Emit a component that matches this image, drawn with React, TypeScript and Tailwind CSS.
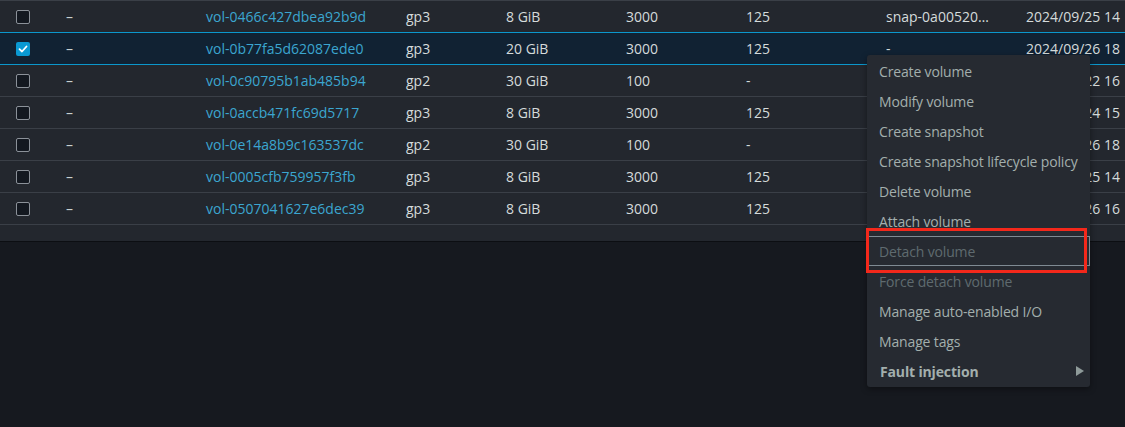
import React from "react";

type Row = {
  id: string;
  type: string;
  size: string;
  iops: string;
  tp: string;
  snap: string;
  date: string;
  selected?: boolean;
};

// snapshot column of rows 3-7 sits under the open menu
const rows: Row[] = [
  { id: "vol-0466c427dbea92b9d", type: "gp3", size: "8 GiB", iops: "3000", tp: "125", snap: "snap-0a00520…", date: "2024/09/25 14" },
  { id: "vol-0b77fa5d62087ede0", type: "gp3", size: "20 GiB", iops: "3000", tp: "125", snap: "-", date: "2024/09/26 18", selected: true },
  { id: "vol-0c90795b1ab485b94", type: "gp2", size: "30 GiB", iops: "100", tp: "-", snap: "", date: "2024/09/22 16" },
  { id: "vol-0accb471fc69d5717", type: "gp3", size: "8 GiB", iops: "3000", tp: "125", snap: "", date: "2024/09/24 15" },
  { id: "vol-0e14a8b9c163537dc", type: "gp2", size: "30 GiB", iops: "100", tp: "-", snap: "", date: "2024/09/26 18" },
  { id: "vol-0005cfb759957f3fb", type: "gp3", size: "8 GiB", iops: "3000", tp: "125", snap: "", date: "2024/09/25 14" },
  { id: "vol-0507041627e6dec39", type: "gp3", size: "8 GiB", iops: "3000", tp: "125", snap: "", date: "2024/09/26 16" },
];

const menu: { label: string; disabled?: boolean; bold?: boolean; sub?: boolean; focused?: boolean }[] = [
  { label: "Create volume" },
  { label: "Modify volume" },
  { label: "Create snapshot" },
  { label: "Create snapshot lifecycle policy" },
  { label: "Delete volume" },
  { label: "Attach volume" },
  { label: "Detach volume", disabled: true, focused: true },
  { label: "Force detach volume", disabled: true },
  { label: "Manage auto-enabled I/O" },
  { label: "Manage tags" },
  { label: "Fault injection", bold: true, sub: true },
];

const Checkbox = ({ checked }: { checked?: boolean }) =>
  checked ? (
    <span className="flex h-[14px] w-[14px] items-center justify-center rounded-[2px] bg-[#0a99d2]">
      <svg width="10" height="10" viewBox="0 0 10 10" fill="none">
        <path d="M1.5 5.2 L4 7.5 L8.5 2.5" stroke="white" strokeWidth="1.8" strokeLinecap="round" strokeLinejoin="round" />
      </svg>
    </span>
  ) : (
    <span className="block h-[14px] w-[14px] rounded-[2px] border border-[#8b9199] bg-[#131820]" />
  );

export default function App() {
  return (
    <div
      className="relative h-[427px] w-[1125px] overflow-hidden bg-[#16191f] text-[14px] text-[#d5dbdb]"
      style={{ fontFamily: '"Open Sans", "Noto Sans", sans-serif' }}
    >
      <div className="border-b border-[#0c0e12] bg-[#23272e] pb-4">
        {rows.map((r, i) => {
          const blueTop = r.selected || rows[i - 1]?.selected;
          return (
            <div
              key={r.id}
              className={`grid h-[32px] grid-cols-[50px_140px_200px_100px_120px_120px_140px_140px_1fr] items-center whitespace-nowrap border-t pl-4 ${
                blueTop ? "border-[#0b97cc]" : "border-[#3a3f47]"
              } ${r.selected ? "bg-[#112233]" : ""}`}
            >
              <Checkbox checked={r.selected} />
              <span className="text-[#c9d1d1]">–</span>
              <span className="text-[#3ba6d0]">{r.id}</span>
              <span>{r.type}</span>
              <span>{r.size}</span>
              <span>{r.iops}</span>
              <span>{r.tp}</span>
              <span className="overflow-hidden">{r.snap}</span>
              <span className="overflow-hidden">{r.date}</span>
            </div>
          );
        })}
        <div className="border-t border-[#3a3f47]" />
      </div>

      <div className="absolute left-[867px] top-[55px] w-[223px] rounded-[3px] bg-[#262a31] py-px tracking-[-0.15px] shadow-[0_2px_6px_rgba(0,0,0,0.4)]">
        {menu.map((m) => (
          <div
            key={m.label}
            className={`flex h-[30px] items-center justify-between whitespace-nowrap pl-3 pr-[6px] ${
              m.focused ? "border border-[#7f8a93] pl-[11px]" : ""
            } ${m.disabled ? "text-[#5f6a6f]" : "text-[#a3afad]"} ${m.bold ? "font-bold" : ""}`}
          >
            <span className={m.bold ? "pl-px" : ""}>{m.label}</span>
            {m.sub && (
              <svg width="8" height="10" viewBox="0 0 8 10">
                <path d="M0 0 L8 5 L0 10 Z" fill="#8e9a99" />
              </svg>
            )}
          </div>
        ))}
      </div>

      <div className="absolute left-[866px] top-[228px] h-[45px] w-[221px] border-[3px] border-[#f3281b]" />
    </div>
  );
}
